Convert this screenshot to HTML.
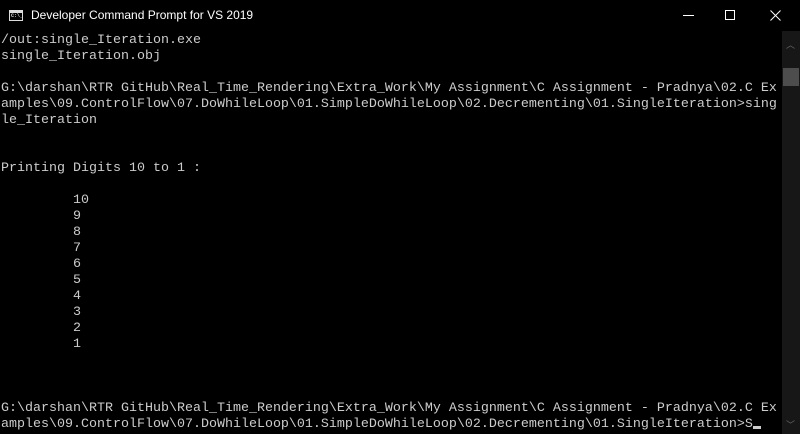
<!DOCTYPE html>
<html><head><meta charset="utf-8"><style>
html,body{margin:0;padding:0;background:#000;width:800px;height:434px;overflow:hidden}
.tb{position:absolute;left:0;top:0;width:800px;height:31px;background:#000}
.title{position:absolute;left:31px;top:8px;color:#fff;font:12px "Liberation Sans",sans-serif}
.icon{position:absolute;left:9px;top:10px;width:14px;height:11px;border:1px solid #ddd;box-sizing:border-box;background:#000}
.icon:before{content:"";position:absolute;left:0;top:0;width:12px;height:2px;background:#ddd}
.icon span{position:absolute;left:1px;top:2px;color:#ddd;font:bold 5px "Liberation Mono",monospace}
.min{position:absolute;left:683px;top:15px;width:11px;height:1px;background:#fff}
.max{position:absolute;left:725px;top:10px;width:10px;height:10px;border:1px solid #fff;box-sizing:border-box}
.sb{position:absolute;left:782px;top:31px;width:18px;height:403px;background:#171717}
.thumb{position:absolute;left:783px;top:68px;width:16px;height:18px;background:#4d4d4d}
.arr{position:absolute;left:786px;color:#666;font:9px "Liberation Sans",sans-serif}
pre{position:absolute;left:1px;top:33px;margin:0;color:#cccccc;font:13.33px/16px "Liberation Mono",monospace}
.cur{display:inline-block;width:8px;height:3px;background:#ccc;vertical-align:-2px;margin-left:0}
</style></head><body>
<div class="tb"><div class="icon"><span>C:\_</span></div><div class="title">Developer Command Prompt for VS 2019</div>
<div class="min"></div><div class="max"></div>
<svg style="position:absolute;left:770px;top:10px" width="11" height="11"><path d="M0.5 0.5L10.5 10.5M10.5 0.5L0.5 10.5" stroke="#fff" stroke-width="1"/></svg></div>
<div class="sb"></div><div class="thumb"></div>
<div class="arr" style="top:38px">︿</div><div class="arr" style="top:418px">﹀</div>
<pre>/out:single_Iteration.exe
single_Iteration.obj

G:\darshan\RTR GitHub\Real_Time_Rendering\Extra_Work\My Assignment\C Assignment - Pradnya\02.C Ex
amples\09.ControlFlow\07.DoWhileLoop\01.SimpleDoWhileLoop\02.Decrementing\01.SingleIteration>sing
le_Iteration


Printing Digits 10 to 1 :

         10
         9
         8
         7
         6
         5
         4
         3
         2
         1



G:\darshan\RTR GitHub\Real_Time_Rendering\Extra_Work\My Assignment\C Assignment - Pradnya\02.C Ex
amples\09.ControlFlow\07.DoWhileLoop\01.SimpleDoWhileLoop\02.Decrementing\01.SingleIteration>S<span class="cur"></span></pre>
</body></html>
